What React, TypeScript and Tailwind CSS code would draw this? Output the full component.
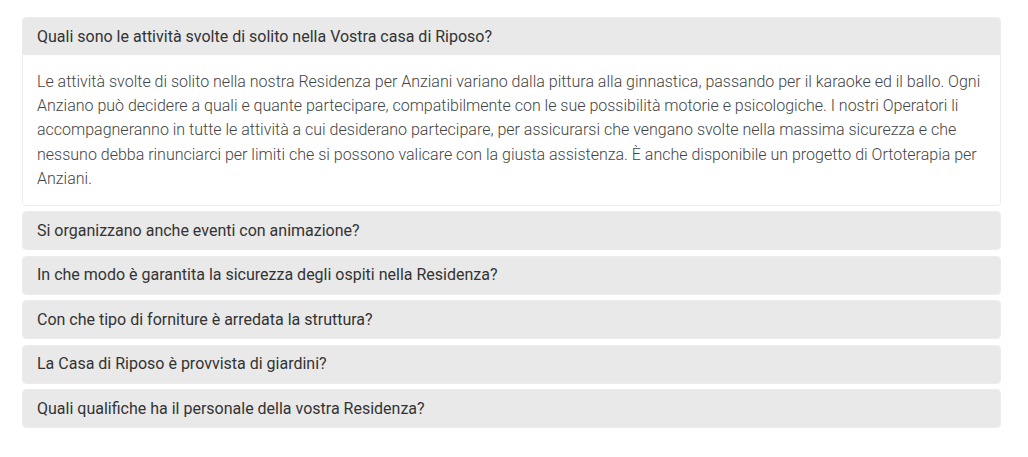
import { useState } from 'react'

const faqs = [
  {
    q: 'Quali sono le attività svolte di solito nella Vostra casa di Riposo?',
    a: 'Le attività svolte di solito nella nostra Residenza per Anziani variano dalla pittura alla ginnastica, passando per il karaoke ed il ballo. Ogni Anziano può decidere a quali e quante partecipare, compatibilmente con le sue possibilità motorie e psicologiche. I nostri Operatori li accompagneranno in tutte le attività a cui desiderano partecipare, per assicurarsi che vengano svolte nella massima sicurezza e che nessuno debba rinunciarci per limiti che si possono valicare con la giusta assistenza. È anche disponibile un progetto di Ortoterapia per Anziani.',
  },
  { q: 'Si organizzano anche eventi con animazione?', a: '' },
  { q: 'In che modo è garantita la sicurezza degli ospiti nella Residenza?', a: '' },
  { q: 'Con che tipo di forniture è arredata la struttura?', a: '' },
  { q: 'La Casa di Riposo è provvista di giardini?', a: '' },
  { q: 'Quali qualifiche ha il personale della vostra Residenza?', a: '' },
]

export default function App() {
  const [open, setOpen] = useState(0)

  return (
    <div className="bg-white min-h-screen pt-[17px] pl-[22px] pr-[27px] font-['Roboto',sans-serif]">
      <div className="flex flex-col gap-[5.5px]">
        {faqs.map((f, i) => (
          <div key={i} className="rounded-[4px] border border-[#ececec] overflow-hidden">
            <button
              onClick={() => setOpen(open === i ? -1 : i)}
              className="w-full text-left bg-[#e9e9e9] px-[14px] py-[6.5px] text-[16px] leading-[24px] text-[#333]"
            >
              {f.q}
            </button>
            {open === i && f.a && (
              <div className="bg-white px-[14px] pt-[14.5px] pb-[13px] text-[16px] leading-[24.4px] font-light text-[#444]">
                {f.a}
              </div>
            )}
          </div>
        ))}
      </div>
    </div>
  )
}
